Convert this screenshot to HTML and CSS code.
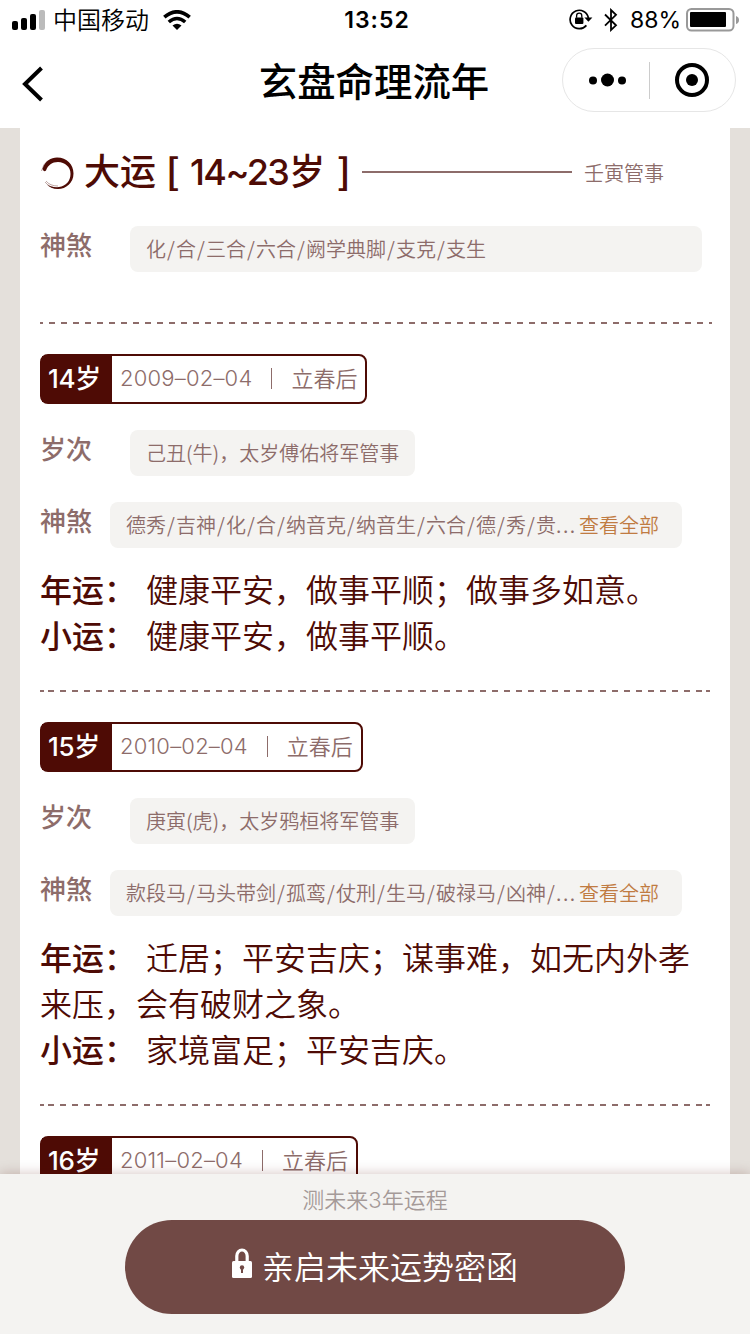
FILE: index.html
```
<!DOCTYPE html>
<html lang="zh-CN">

<head>
    <meta charset="UTF-8">
    <meta name="viewport" content="width=device-width, initial-scale=1.0">
    <title>玄盘命理流年</title>
    <link rel="stylesheet" href="styles.css">
</head>

<body>
    <div class="status">
        <div class="status-left">
            <svg class="signal" width="34" height="20" viewBox="0 0 34 20">
                <rect x="0" y="11" width="6" height="9" rx="2"/>
                <rect x="9" y="8" width="6" height="12" rx="2"/>
                <rect x="18" y="4" width="6" height="16" rx="2"/>
                <rect x="27" y="0" width="6" height="20" rx="2" fill="#bbb"/>
            </svg>
            <span class="carrier">中国移动</span>
            <svg class="wifi" width="28" height="20" viewBox="0 0 28 20">
                <g fill="none" stroke="#000" stroke-width="3.6">
                    <path d="M1.3 7.2Q14-3.6 26.7 7.2"/>
                    <path d="M5.8 12Q14 5 22.2 12"/>
                </g>
                <path d="M9.5 15.5Q14 12 18.5 15.5L14 20Z"/>
            </svg>
        </div>
        <span class="time">13:52</span>
        <div class="status-right">
            <svg class="rotate" width="24" height="22" viewBox="0 0 24 22">
                <path d="M17.4 16.4A9.2 9.2 0 1 1 19.4 9" fill="none" stroke="#000" stroke-width="1.7"/>
                <path d="M15.4 8.6H23.4L19.4 12.8Z"/>
                <rect x="6" y="8.6" width="8.4" height="6.4" rx="1"/>
                <path d="M7.6 8.8V6.8a2.6 2.6 0 0 1 5.2 0V8.8" fill="none" stroke="#000" stroke-width="1.3"/>
            </svg>
            <svg class="bluetooth" width="14" height="24" viewBox="0 0 14 24">
                <path d="M1 6.5L12 17.3L7 22V2L12 6.8L1 17.6" fill="none" stroke="#000" stroke-width="1.8"/>
            </svg>
            <span class="percent">88%</span>
            <svg class="battery" width="54" height="24" viewBox="0 0 54 24">
                <rect x="1" y="1" width="46.5" height="21.5" rx="4.5" fill="none" stroke="#999" stroke-width="2"/>
                <rect x="4" y="4" width="36" height="15" rx="1"/>
                <path d="M50 8Q53 9 53 12T50 16Z" fill="#999"/>
            </svg>
        </div>
    </div>
    <div class="nav">
        <svg class="back" width="24" height="38" viewBox="0 0 24 38">
            <path d="M21.5 3L5 19L21.5 35" fill="none" stroke="#000" stroke-width="4"/>
        </svg>
        <h1>玄盘命理流年</h1>
        <div class="capsule">
            <svg width="38" height="14" viewBox="0 0 38 14">
                <circle cx="4" cy="7.5" r="4"/>
                <circle cx="18.5" cy="7" r="6.5"/>
                <circle cx="33" cy="7.5" r="4"/>
            </svg>
            <i class="split"></i>
            <svg width="36" height="36" viewBox="0 0 36 36">
                <circle cx="18" cy="18" r="15" fill="none" stroke="#000" stroke-width="4"/>
                <circle cx="18" cy="18" r="6"/>
            </svg>
        </div>
    </div>

    <div class="main">
        <div class="card">
            <div class="dayun">
                <svg class="ink" width="34" height="34" viewBox="0 0 34 34">
                    <path d="M1.5 12C4 4 10 .5 16 .5C26 .5 32.5 7.500 32.500 16.500C32.500 26 25 32 17 32C12 32 8 30 6 27.500C10 30 14 30.800 18 30C25 29 29.500 24 29.500 17C29.500 9.500 24 5.500 17 5C11 5 7 8 5 13.500Q3 15.500 1.500 12Z" fill="#4e0b05"/>
                    <path d="M4 25Q9 31.500 18 31M5 24Q9 29 17 29" fill="none" stroke="#4e0b05" stroke-opacity=".45" stroke-width=".8"/>
                    <path d="M.5 14Q2 7 7 3.500" fill="none" stroke="#4e0b05" stroke-opacity=".5" stroke-width=".8"/>
                </svg>
                <h2>大运<span class="bracket">[</span><span class="range">14~23<span>岁</span></span><span class="bracket">]</span></h2>
                <i class="line"></i>
                <span class="manage">壬寅管事</span>
            </div>
            <div class="row">
                <b class="label">神煞</b>
                <p class="pill wide">化<i>/</i>合<i>/</i>三合<i>/</i>六合<i>/</i>阙学典脚<i>/</i>支克<i>/</i>支生</p>
            </div>
        </div>

        <div class="year first">
            <div class="tag"><b>14岁</b><span class="date">2009–02–04</span><i></i><span class="term">立春后</span></div>
            <div class="row">
                <b class="label">岁次</b>
                <p class="pill">己丑(牛)，太岁傅佑将军管事</p>
            </div>
            <div class="row">
                <b class="label">神煞</b>
                <p class="pill more">德秀<i>/</i>吉神<i>/</i>化<i>/</i>合<i>/</i>纳音克<i>/</i>纳音生<i>/</i>六合<i>/</i>德<i>/</i>秀<i>/</i>贵<span class="dots">...</span><a>查看全部</a></p>
            </div>
            <div class="text">
                <p><b>年运：</b>健康平安，做事平顺；做事多如意。</p>
                <p><b>小运：</b>健康平安，做事平顺。</p>
            </div>
        </div>

        <div class="year">
            <div class="tag"><b>15岁</b><span class="date">2010–02–04</span><i></i><span class="term">立春后</span></div>
            <div class="row">
                <b class="label">岁次</b>
                <p class="pill">庚寅(虎)，太岁鸦桓将军管事</p>
            </div>
            <div class="row">
                <b class="label">神煞</b>
                <p class="pill more">款段马<i>/</i>马头带剑<i>/</i>孤鸾<i>/</i>仗刑<i>/</i>生马<i>/</i>破禄马<i>/</i>凶神<i>/</i><span class="dots">...</span><a>查看全部</a></p>
            </div>
            <div class="text">
                <p><b>年运：</b>迁居；平安吉庆；谋事难，如无内外孝来压，会有破财之象。</p>
                <p><b>小运：</b>家境富足；平安吉庆。</p>
            </div>
        </div>

        <div class="year">
            <div class="tag"><b>16岁</b><span class="date">2011–02–04</span><i></i><span class="term">立春后</span></div>
        </div>
    </div>

    <div class="footer">
        <p>测未来3年运程</p>
        <button class="btn">
            <svg width="20" height="30" viewBox="0 0 20 30">
                <path d="M4.8 14V8a5.2 6 0 0 1 10.4 0V14" fill="none" stroke="#fff" stroke-width="3.2"/>
                <rect x="0" y="13" width="20" height="17" rx="1.5" fill="#fff"/>
                <circle cx="10" cy="19.5" r="2.2" fill="#714945"/>
                <rect x="9" y="20" width="2" height="5" fill="#714945"/>
            </svg>
            <span>亲启未来运势密函</span>
        </button>
    </div>
</body>

</html>
```
FILE: styles.css
```
* {
    box-sizing: border-box;
}
body {
    margin: 0;
    height: 1334px;
    display: flex;
    flex-direction: column;
    overflow: hidden;
    background: #fff;
    color: #4e0b05;
    font-family: Inter, "Noto Sans CJK SC", sans-serif;
}
h1, h2, p {
    margin: 0;
}
svg {
    display: block;
    flex: none;
}
i {
    font-style: normal;
}

/* 状态栏 */
.status {
    height: 40px;
    padding: 1px 10px 0 12px;
    display: grid;
    grid-template-columns: 1fr auto 1fr;
    align-items: center;
    color: #000;
    font-size: 24px;
    line-height: 39px;
}
.status-left, .status-right {
    display: flex;
    align-items: center;
}
.status-right {
    justify-content: flex-end;
}
.signal, .wifi {
    margin-top: -2px;
}
.carrier {
    margin: 0 14px 0 7px;
    font-weight: 350;
}
.time {
    padding-left: 2px;
    font-size: 23px;
    font-weight: 600;
    letter-spacing: 1px;
}
.rotate, .bluetooth, .battery {
    margin-top: -1px;
}
.bluetooth {
    margin-left: 11px;
    margin-right: 12px;
}
.percent {
    margin-right: 5px;
    font-size: 23px;
}

/* 导航 */
.nav {
    height: 88px;
    padding: 0 14px 0 20px;
    display: grid;
    grid-template-columns: 174px 1fr 174px;
    align-items: center;
    color: #000;
}
.back {
    margin-top: -1px;
}
.nav h1 {
    margin: -5px 0 0 -8px;
    text-align: center;
    font-size: 38.4px;
    font-weight: 500;
    line-height: 60px;
    white-space: nowrap;
}
.capsule {
    width: 174px;
    height: 64px;
    margin-top: -8px;
    padding: 0 25px 0 26px;
    display: flex;
    align-items: center;
    justify-content: space-between;
    border: 1px solid #e6e6e6;
    border-radius: 32px;
}
.capsule .split {
    width: 1px;
    height: 37px;
    margin-right: 2px;
    background: #ccc;
}

/* 内容 */
.main {
    height: 1046px;
    padding: 0 20px;
    overflow: hidden;
    border: solid #e4e0db;
    border-width: 0 20px;
}
.card {
    height: 194px;
}
.dayun {
    height: 98px;
    padding-bottom: 10px;
    display: flex;
    align-items: center;
}
.ink {
    margin: 3px 0 0 1px;
}
.dayun h2 {
    display: flex;
    margin-left: 9px;
    font-size: 36px;
    font-weight: 500;
    line-height: 50px;
    white-space: nowrap;
}
.bracket {
    width: 14px;
    margin: -3px 0 0 10px;
    font-family: "Noto Sans CJK SC", sans-serif;
    font-weight: 700;
}
.range {
    width: 137px;
    margin-left: 10px;
    letter-spacing: -1.6px;
}
.range span {
    margin-left: 1px;
}
.line {
    width: 210px;
    height: 2px;
    margin: 0 12px 0 11px;
    background: #8d6c6a;
}
.manage {
    color: #8d6c6a;
    font-size: 20px;
    font-weight: 350;
}
.row {
    height: 46px;
    display: flex;
    color: #8d6c6a;
}
.label {
    width: 90px;
    font-size: 26px;
    font-weight: 500;
    line-height: 40px;
}
.pill {
    height: 46px;
    padding: 0 16px;
    background: #f4f3f1;
    border-radius: 8px;
    font-family: "Noto Sans CJK SC", sans-serif;
    font-size: 20px;
    font-weight: 350;
    line-height: 46px;
    white-space: nowrap;
}
.pill i {
    display: inline-block;
    width: 10px;
    text-align: center;
}
.pill.wide {
    width: 572px;
}
.pill.more {
    width: 572px;
    margin-left: -20px;
}
.dots {
    display: inline-block;
    width: 23px;
    letter-spacing: 1.5px;
}
.pill a {
    color: #c07b42;
}
.year {
    padding: 32px 0 30px;
    background:
        linear-gradient(#8d6c6a, #8d6c6a) 0 0 / 4px 2px no-repeat,
        linear-gradient(#8d6c6a, #8d6c6a) 100% 0 / 4px 2px no-repeat,
        repeating-linear-gradient(90deg, #8d6c6a 0 6px, transparent 6px 12px) -4px 0 / 684px 2px no-repeat;
}
.year.first {
    margin-right: -2px;
    background: repeating-linear-gradient(90deg, #8d6c6a 0 6px, transparent 6px 12px) -3px 0 / 684px 2px no-repeat;
}
.tag {
    width: fit-content;
    height: 50px;
    display: flex;
    align-items: center;
    padding-right: 8px;
    border: 2px solid #4e0b05;
    border-radius: 8px;
    color: #8d6c6a;
    font-size: 22px;
    font-weight: 350;
}
.tag b {
    width: 70px;
    margin-right: 8px;
    padding-left: 6px;
    background: #4e0b05;
    color: #fff;
    font-size: 26px;
    font-weight: 500;
    letter-spacing: -0.3px;
    line-height: 46px;
}
.date {
    margin-top: -2px;
    letter-spacing: 0.2px;
}
.tag i {
    width: 1px;
    height: 21px;
    margin: -2px 19px 0 19px;
    background: #8d6c6a;
}
.term {
    margin-top: -4px;
}
.year .row {
    margin-top: 26px;
}
.text {
    margin-top: 20px;
    font-size: 32px;
    font-weight: 350;
    line-height: 46px;
}
.text b {
    margin-right: 10px;
    font-weight: 500;
}

/* 底部 */
.footer {
    position: relative;
    height: 160px;
    display: flex;
    flex-direction: column;
    align-items: center;
    background: #f4f3f1;
    box-shadow: 0 0 12px rgba(78, 11, 5, 0.25);
}
.footer p {
    height: 46px;
    padding-top: 4px;
    color: #a59a98;
    font-size: 22px;
    font-weight: 350;
    line-height: 44px;
}
.btn {
    width: 500px;
    height: 94px;
    padding: 0;
    display: flex;
    align-items: center;
    justify-content: center;
    border: 0;
    border-radius: 47px;
    background: #714945;
    color: #fff;
    font-family: inherit;
    font-size: 32px;
    font-weight: 350;
}
.btn svg {
    margin: -8px 10px 0 0;
}
.btn span {
    margin-top: -4px;
}
```
